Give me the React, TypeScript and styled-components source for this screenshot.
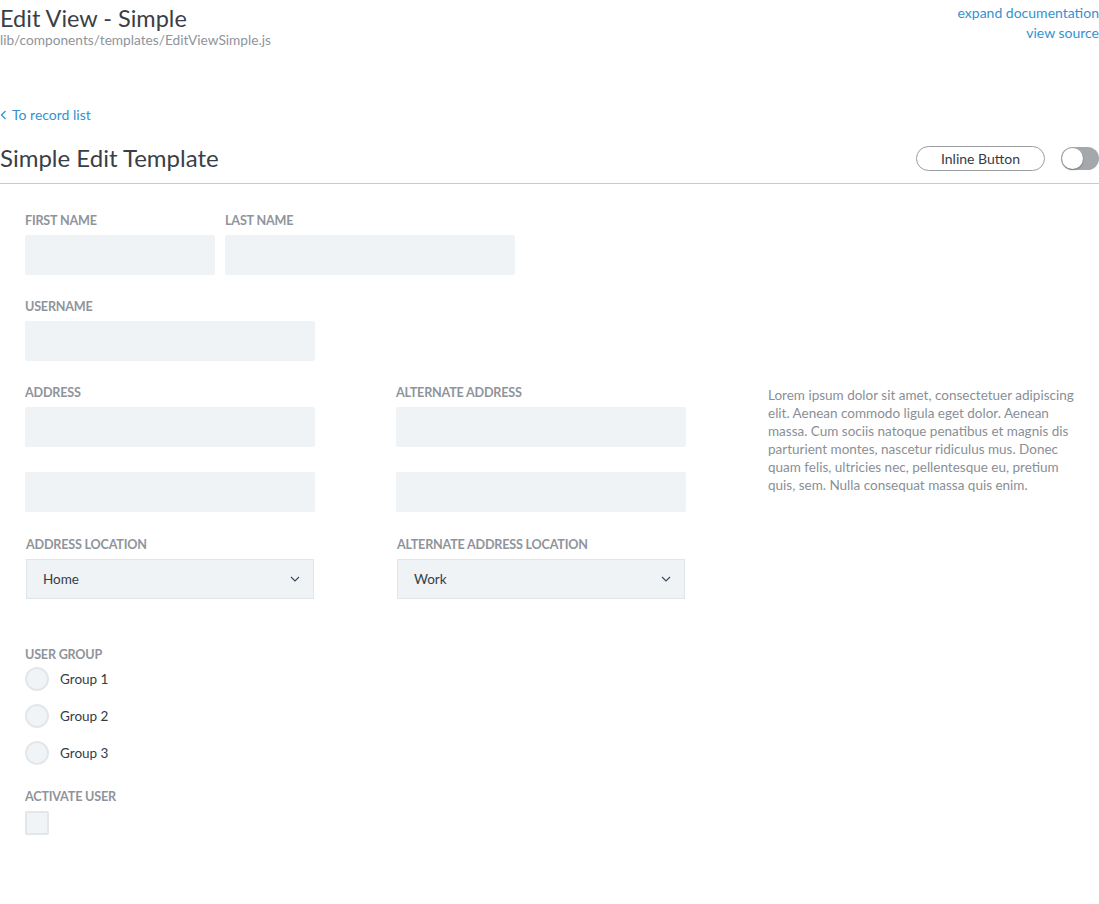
import styled, { createGlobalStyle } from "styled-components";

const GlobalStyle = createGlobalStyle`
  html, body {
    margin: 0;
    padding: 0;
    background: #fff;
    font-family: "Lato", "Open Sans", sans-serif;
    color: #333c48;
  }
`;

const Page = styled.div`
  width: 1099px;
  overflow: hidden;
`;

const TopBar = styled.div`
  display: flex;
  justify-content: space-between;
  align-items: flex-start;
  height: 100px;
`;

const DocTitle = styled.h1`
  margin: 4px 0 0;
  font-size: 23.5px;
  font-weight: 400;
  line-height: 28px;
  color: #3a3f47;
`;

const DocPath = styled.div`
  font-size: 13.7px;
  line-height: 16px;
  color: #8f949b;
`;

const DocLinks = styled.div`
  display: flex;
  flex-direction: column;
  align-items: flex-end;
  padding-top: 3px;
`;

const DocLink = styled.a`
  font-size: 14px;
  line-height: 20px;
  color: #3392d1;
  text-decoration: none;
`;

const BackLink = styled.a`
  display: flex;
  align-items: center;
  gap: 5px;
  font-size: 14px;
  line-height: 30px;
  color: #3392d1;
  text-decoration: none;
`;

const HeaderRow = styled.div`
  display: flex;
  justify-content: space-between;
  align-items: center;
  height: 49px;
  padding-top: 4px;
  border-bottom: 1px solid #c8cacc;
`;

const HeaderTitle = styled.h2`
  margin: 0 0 2px;
  font-size: 24px;
  font-weight: 400;
  color: #3a3f47;
`;

const HeaderActions = styled.div`
  display: flex;
  align-items: center;
  gap: 16px;
`;

const PillButton = styled.button`
  width: 129px;
  height: 25px;
  border: 1px solid #9a9ea3;
  border-radius: 13px;
  background: #fff;
  font-family: inherit;
  font-size: 14px;
  color: #333c48;
  padding: 0;
`;

const Toggle = styled.div`
  position: relative;
  width: 38px;
  height: 23px;
  border-radius: 12px;
  background: #a4a8ad;
`;

const Knob = styled.div`
  position: absolute;
  left: 1px;
  top: 1px;
  width: 21px;
  height: 21px;
  border-radius: 50%;
  background: #fff;
  box-shadow: 0 1px 2px rgba(0, 0, 0, 0.3);
`;

const Body = styled.div`
  display: flex;
  padding: 29px 0 0 25px;
`;

const Form = styled.div`
  width: 743px;
  display: flex;
  flex-direction: column;
`;

const Row = styled.div<{ $gap?: number; $mb?: number }>`
  display: flex;
  gap: ${(p) => p.$gap ?? 10}px;
  margin-bottom: ${(p) => p.$mb ?? 24}px;
`;

const Field = styled.div<{ $indent?: number }>`
  display: flex;
  flex-direction: column;
  padding-left: ${(p) => p.$indent ?? 0}px;
`;

const Label = styled.label<{ $mb?: number }>`
  font-size: 12.6px;
  font-weight: 700;
  line-height: 16px;
  color: #8f949b;
  text-transform: uppercase;
  margin-bottom: ${(p) => p.$mb ?? 6}px;
  letter-spacing: -0.2px;
`;

const Input = styled.div<{ $w: number; $mt?: number }>`
  width: ${(p) => p.$w}px;
  height: 40px;
  margin-top: ${(p) => p.$mt ?? 0}px;
  background: #eff3f6;
  border-radius: 2px;
`;

const Select = styled.div`
  width: 288px;
  height: 40px;
  box-sizing: border-box;
  border: 1px solid #e0e5e9;
  background: #eff3f6;
  display: flex;
  align-items: center;
  justify-content: space-between;
  padding: 0 13px 0 16px;
  font-size: 13.5px;
  color: #333c48;
`;

const Group = styled.div<{ $mt?: number }>`
  display: flex;
  flex-direction: column;
  margin-top: ${(p) => p.$mt ?? 0}px;
`;

const RadioRow = styled.div`
  display: flex;
  align-items: center;
  gap: 11px;
  height: 24px;
  margin-bottom: 13px;
  font-size: 13.5px;
  color: #333c48;
`;

const Radio = styled.span`
  width: 20px;
  height: 20px;
  border-radius: 50%;
  border: 2px solid #e3e7ea;
  background: #f1f4f7;
`;

const Checkbox = styled.span`
  width: 20px;
  height: 20px;
  border-radius: 2px;
  border: 2px solid #e3e7ea;
  background: #f1f4f7;
`;

const Aside = styled.p`
  margin: 173px 0 0;
  width: 320px;
  font-size: 13.5px;
  line-height: 18px;
  color: #8a8f96;
`;

const Chevron = () => (
  <svg width="10" height="6" viewBox="0 0 10 6">
    <path d="M1 1l4 4 4-4" fill="none" stroke="#3c4a5c" strokeWidth="1.2" />
  </svg>
);

export default function App() {
  return (
    <Page>
      <GlobalStyle />
      <TopBar>
        <div>
          <DocTitle>Edit View - Simple</DocTitle>
          <DocPath>lib/components/templates/EditViewSimple.js</DocPath>
        </div>
        <DocLinks>
          <DocLink href="#">expand documentation</DocLink>
          <DocLink href="#">view source</DocLink>
        </DocLinks>
      </TopBar>

      <BackLink href="#">
        <svg width="7" height="10" viewBox="0 0 7 10">
          <path d="M5.5 1L1.5 5l4 4" fill="none" stroke="#3392d1" strokeWidth="1.3" />
        </svg>
        To record list
      </BackLink>

      <HeaderRow>
        <HeaderTitle>Simple Edit Template</HeaderTitle>
        <HeaderActions>
          <PillButton>Inline Button</PillButton>
          <Toggle>
            <Knob />
          </Toggle>
        </HeaderActions>
      </HeaderRow>

      <Body>
        <Form>
          <Row>
            <Field>
              <Label>First Name</Label>
              <Input $w={190} />
            </Field>
            <Field>
              <Label>Last Name</Label>
              <Input $w={290} />
            </Field>
          </Row>
          <Row>
            <Field>
              <Label>Username</Label>
              <Input $w={290} />
            </Field>
          </Row>
          <Row $gap={81} $mb={25}>
            <Field>
              <Label>Address</Label>
              <Input $w={290} />
              <Input $w={290} $mt={25} />
            </Field>
            <Field>
              <Label>Alternate Address</Label>
              <Input $w={290} />
              <Input $w={290} $mt={25} />
            </Field>
          </Row>
          <Row $gap={83} $mb={48}>
            <Field $indent={1}>
              <Label>Address Location</Label>
              <Select>
                Home
                <Chevron />
              </Select>
            </Field>
            <Field>
              <Label>Alternate Address Location</Label>
              <Select>
                Work
                <Chevron />
              </Select>
            </Field>
          </Row>
          <Group>
            <Label $mb={4}>User Group</Label>
            <RadioRow>
              <Radio />
              Group 1
            </RadioRow>
            <RadioRow>
              <Radio />
              Group 2
            </RadioRow>
            <RadioRow>
              <Radio />
              Group 3
            </RadioRow>
          </Group>
          <Group $mt={11}>
            <Label $mb={6}>Activate User</Label>
            <Checkbox />
          </Group>
        </Form>
        <Aside>
          Lorem ipsum dolor sit amet, consectetuer adipiscing elit. Aenean commodo ligula eget
          dolor. Aenean massa. Cum sociis natoque penatibus et magnis dis parturient montes,
          nascetur ridiculus mus. Donec quam felis, ultricies nec, pellentesque eu, pretium quis,
          sem. Nulla consequat massa quis enim.
        </Aside>
      </Body>
    </Page>
  );
}
